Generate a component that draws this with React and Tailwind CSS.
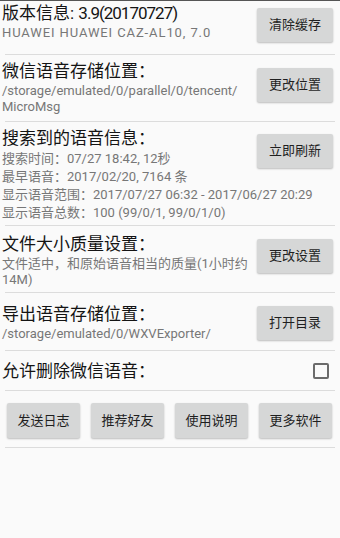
function Btn({ children, className = "" }) {
  return (
    <button
      className={`h-[34px] w-[76px] shrink-0 rounded-[2px] bg-[#d6d7d7] text-[13px] text-[#1f1f1f] shadow-[0_1px_2px_rgba(0,0,0,0.25)] ${className}`}
    >
      {children}
    </button>
  );
}

function Divider() {
  return <div className="mx-[5px] h-px bg-[#dcdcdc]" />;
}

function Row({ title, lines = [], btn, btnTop, className = "", lineClass = "" }) {
  return (
    <div className={`flex items-start ${className}`}>
      <div className="min-w-0 flex-1 pl-[2px]">
        <div className="text-[17px] leading-[24px] text-[#141414]">{title}</div>
        {lines.map((l, i) => (
          <div key={i} className={`text-[13px] leading-[16px] text-[#777] ${lineClass}`}>
            {l}
          </div>
        ))}
      </div>
      <Btn className={`ml-[5px] mr-[7px] ${btnTop}`}>{btn}</Btn>
    </div>
  );
}

export default function App() {
  return (
    <div className="min-h-[538px] w-[340px] bg-[#fafafa] font-['Roboto','Noto_Sans_CJK_SC',sans-serif]">
      <div className="h-px bg-[#555]" />

      <Row
        title={<>版本信息: <span className="tracking-[-1px]">3.9(20170727)</span></>}
        lines={["HUAWEI HUAWEI CAZ-AL10, 7.0"]}
        lineClass="tracking-[0.9px]"
        btn="清除缓存"
        btnTop="mt-[7px]"
        className="pb-[12px]"
      />
      <Divider />

      <Row
        title="微信语音存储位置："
        lines={[<>/storage/emulated/0/parallel/0/tencent/<wbr />MicroMsg</>]}
        btn="更改位置"
        btnTop="mt-[9px]"
        className="pt-[4px] pb-[6px]"
      />
      <Divider />

      <div className="flex items-start pt-[4px] pb-[3px]">
        <div className="min-w-0 flex-1 pl-[2px]">
          <div className="text-[17px] leading-[24px] text-[#141414]">搜索到的语音信息：</div>
          <div className="text-[13px] leading-[18px] text-[#777]">搜索时间：07/27 18:42, 12秒</div>
          <div className="text-[13px] leading-[18px] text-[#777]">最早语音：2017/02/20, 7164 条</div>
          <div className="whitespace-nowrap text-[13px] leading-[18px] text-[#777]">
            显示语音范围：2017/07/27 06:32 - 2017/06/27 20:29
          </div>
          <div className="whitespace-nowrap text-[13px] leading-[18px] text-[#777]">
            显示语音总数：100 (99/0/1, 99/0/1/0)
          </div>
        </div>
        <Btn className="ml-[5px] mr-[7px] mt-[8px]">立即刷新</Btn>
      </div>
      <Divider />

      <Row
        title="文件大小质量设置："
        lines={["文件适中，和原始语音相当的质量(1小时约14M)"]}
        btn="更改设置"
        btnTop="mt-[7px]"
        className="pt-[6px] pb-[4px]"
      />
      <Divider />

      <Row
        title="导出语音存储位置："
        lines={["/storage/emulated/0/WXVExporter/"]}
        btn="打开目录"
        btnTop="mt-[4px]"
        className="pt-[9px] pb-[8px]"
      />
      <Divider />

      <div className="flex items-center justify-between pt-[8px] pb-[7px] pl-[2px] pr-[11px]">
        <span className="text-[17px] leading-[24px] text-[#141414]">允许删除微信语音：</span>
        <span className="h-[16px] w-[16px] rounded-[2px] border-2 border-[#6b6b6b]" />
      </div>
      <Divider />

      <div className="flex justify-between pt-[12px] pb-[9px] pl-[7px] pr-[8px]">
        {["发送日志", "推荐好友", "使用说明", "更多软件"].map((t) => (
          <button
            key={t}
            className="h-[35px] w-[73px] rounded-[2px] bg-[#d6d7d7] text-[13px] text-[#1f1f1f] shadow-[0_1px_2px_rgba(0,0,0,0.25)]"
          >
            {t}
          </button>
        ))}
      </div>
      <Divider />
    </div>
  );
}
